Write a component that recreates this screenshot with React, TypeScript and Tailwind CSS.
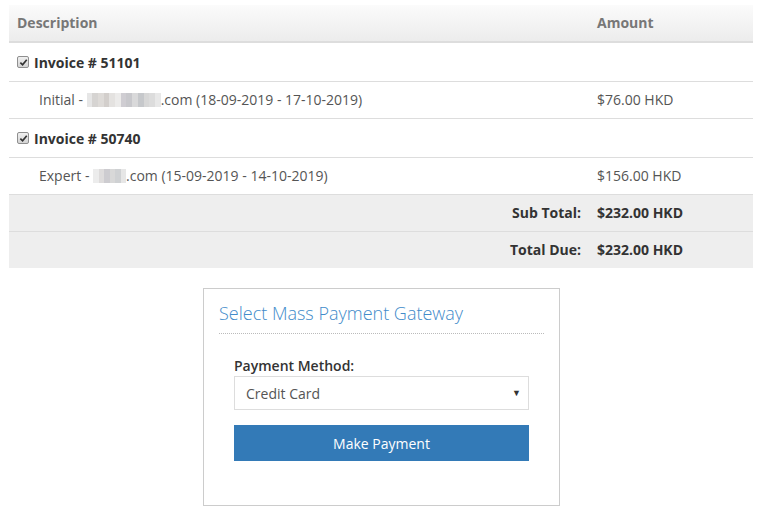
const font = { fontFamily: '"Open Sans", "Liberation Sans", sans-serif' };

function Check() {
  return (
    <span className="inline-flex h-[12px] w-[12px] items-center justify-center rounded-[2px] border border-[#8f8f8f] bg-gradient-to-b from-[#f0f0f0] to-[#d4d4d4]">
      <svg viewBox="0 0 10 10" className="h-[9px] w-[9px]">
        <path d="M1.5 5.2 L4 7.6 L8.6 2" fill="none" stroke="#333" strokeWidth="1.9" />
      </svg>
    </span>
  );
}

// pixelated stand-in for the blurred domain name
function Blur({ cells, width }: { cells: string[]; width: number }) {
  return (
    <span className="inline-flex h-[14px] translate-y-[2px] align-baseline" style={{ width }}>
      {cells.map((c, i) => (
        <span key={i} className="h-full flex-1" style={{ background: c }} />
      ))}
    </span>
  );
}

const blurA = ["#e6e6e6", "#d6d4d2", "#dedbd8", "#d3cfcc", "#e4e2e0", "#ecebea", "#cfcdd2", "#c8c8cc", "#d9d9da", "#c6c8cb", "#d7d7d7", "#dcdcdc", "#e8e8e8"];
const blurB = ["#ececec", "#dedcdc", "#cdccd0", "#d8d8d8", "#cfd1d3", "#e6e6e6"];

function InvoiceRow({ num }: { num: string }) {
  return (
    <div className="flex h-[39px] items-center gap-[5px] border-t border-[#ddd] px-2 text-[14px] font-bold text-[#333]">
      <Check />
      <span>Invoice # {num}</span>
    </div>
  );
}

function ItemRow({ label, cells, width, dates, amount }: { label: string; cells: string[]; width: number; dates: string; amount: string }) {
  return (
    <div className="flex h-[37px] items-center border-t border-[#ddd] pb-[2px] text-[14px] text-[#555]">
      <div className="w-[580px] pl-[30px]">
        {label} - <Blur cells={cells} width={width} />.com ({dates})
      </div>
      <div className="pl-2">{amount}</div>
    </div>
  );
}

function TotalRow({ label, amount }: { label: string; amount: string }) {
  return (
    <div className="flex h-[37px] items-center border-t border-[#ddd] bg-[#eeeeee] pb-[2px] text-[14px] font-bold text-[#333]">
      <div className="w-[580px] pr-2 text-right">{label}</div>
      <div className="pl-2">{amount}</div>
    </div>
  );
}

export default function App() {
  return (
    <div className="min-h-[517px] bg-white pt-[5px]" style={font}>
      <div className="ml-[9px] w-[744px]">
        <div className="flex h-[38px] items-center border-b-2 border-[#ddd] bg-gradient-to-b from-[#fbfbfb] to-[#ececec] pb-[2px] text-[14px] font-bold text-[#777]">
          <div className="w-[580px] px-2">Description</div>
          <div className="pl-2">Amount</div>
        </div>
        <div className="-mt-px">
          <InvoiceRow num="51101" />
          <ItemRow label="Initial" cells={blurA} width={74} dates="18-09-2019 - 17-10-2019" amount="$76.00 HKD" />
          <InvoiceRow num="50740" />
          <ItemRow label="Expert" cells={blurB} width={33} dates="15-09-2019 - 14-10-2019" amount="$156.00 HKD" />
          <TotalRow label="Sub Total:" amount="$232.00 HKD" />
          <TotalRow label="Total Due:" amount="$232.00 HKD" />
        </div>
      </div>

      <div className="ml-[203px] mt-[20px] h-[218px] w-[357px] border border-[#ccc] px-[15px]">
        <div className="border-b border-dotted border-[#bbb] pb-[7px] pt-[11px] text-[18px] font-light leading-[26px] text-[#428bca]">
          Select Mass Payment Gateway
        </div>
        <div className="px-[15px] pt-[22px]">
          <div className="text-[14px] font-semibold leading-[20px] text-[#333]">Payment Method:</div>
          <div className="flex h-[34px] items-center justify-between border border-[#ddd] pl-[11px] pr-[7px] text-[14px] text-[#555]">
            <span>Credit Card</span>
            <span className="text-[9px] text-[#333]">▼</span>
          </div>
          <button className="mt-[15px] flex h-[36px] w-full items-center justify-center bg-[#337ab7] text-[14px] text-white">
            Make Payment
          </button>
        </div>
      </div>
    </div>
  );
}
